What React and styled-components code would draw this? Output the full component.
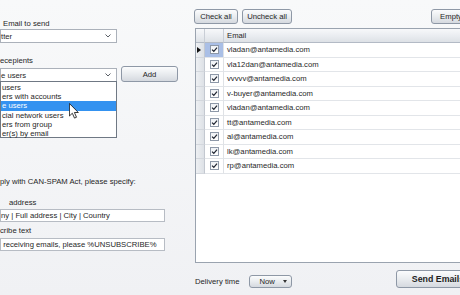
import React from 'react';
import styled, { createGlobalStyle } from 'styled-components';

const Global = createGlobalStyle`
  html, body { margin: 0; padding: 0; background: #f3f4f6; }
  body {
    font-family: "Liberation Sans", Arial, sans-serif;
    font-size: 7.7px;
    color: #1f1f1f;
    overflow: hidden;
  }
`;

const Page = styled.div`
  width: 460px;
  height: 295px;
  overflow: hidden;
  background: linear-gradient(#f8f9fa, #f0f1f4);
`;

const Inner = styled.div`
  width: 490px;
  height: 295px;
  display: flex;
`;

const Left = styled.div`
  width: 194px;
  flex: none;
  display: flex;
  flex-direction: column;
  padding-top: 19px;
  box-sizing: border-box;
`;

const Label = styled.div`
  height: 10px;
  line-height: 10px;
  margin-top: ${(p) => p.$mt || 0}px;
  margin-left: ${(p) => p.$ml || 0}px;
  white-space: nowrap;
`;

const Select = styled.div`
  position: relative;
  width: 117px;
  height: 14px;
  flex: none;
  box-sizing: border-box;
  border: 1px solid #abb1ba;
  background: #fff;
  display: flex;
  align-items: center;
  justify-content: space-between;
  padding-right: 5px;
  white-space: nowrap;
`;

const Chevron = () => (
  <svg width="6" height="4" viewBox="0 0 6 4">
    <path d="M0.5 0.5 L3 3 L5.5 0.5" fill="none" stroke="#5a5f66" strokeWidth="1" />
  </svg>
);

const PickRow = styled.div`
  display: flex;
  align-items: flex-end;
  gap: 4px;
`;

const Dropdown = styled.div`
  position: absolute;
  top: 100%;
  left: -1px;
  width: 117px;
  height: 57px;
  box-sizing: border-box;
  border: 1px solid #6f7884;
  background: #fff;
  padding-top: 0.5px;
  z-index: 2;
`;

const Option = styled.div`
  height: 9.4px;
  line-height: 9.4px;
  padding-left: 1px;
  white-space: nowrap;
  background: ${(p) => (p.$active ? '#3492f0' : 'transparent')};
  color: ${(p) => (p.$active ? '#fff' : '#1f1f1f')};
`;

const Cursor = styled.svg`
  position: absolute;
  left: 68px;
  top: 20px;
`;

const Button = styled.button`
  width: ${(p) => p.$w}px;
  height: ${(p) => p.$h}px;
  flex: none;
  box-sizing: border-box;
  border: 1px solid #8e98a6;
  border-radius: 3px;
  background: linear-gradient(#fbfcfd, #e9ecef 50%, #d5d9df);
  font-family: inherit;
  font-size: ${(p) => p.$fs || 7.7}px;
  font-weight: ${(p) => (p.$bold ? 700 : 400)};
  color: #1f1f1f;
  padding: 0;
  margin-left: ${(p) => (p.$push ? 'auto' : '0')};
  display: flex;
  align-items: center;
  justify-content: center;
  white-space: nowrap;
`;

const Field = styled.div`
  width: 165px;
  height: 13px;
  box-sizing: border-box;
  border: 1px solid #b7bcc4;
  background: #fff;
  line-height: 11px;
  white-space: nowrap;
  overflow: hidden;
  margin-top: ${(p) => p.$mt || 0}px;
`;

const Right = styled.div`
  flex: 1;
  display: flex;
  flex-direction: column;
  padding: 9px 10px 0 0;
  box-sizing: border-box;
`;

const Toolbar = styled.div`
  display: flex;
  gap: 4px;
  height: 15px;
  padding-right: 9px;
`;

const Grid = styled.div`
  margin: 4px 0 0 1px;
  height: 235px;
  box-sizing: border-box;
  border: 1px solid #9aa3af;
  background: #fff;
  display: flex;
  flex-direction: column;
`;

const GridRow = styled.div`
  display: grid;
  grid-template-columns: 9px 19px 1fr;
  height: ${(p) => (p.$head ? 14 : 14.5)}px;
  flex: none;
`;

const HeadCell = styled.div`
  background: linear-gradient(#f7f8fa, #e9ecf0 55%, #dde1e6);
  border-right: 1px solid #c9ced6;
  border-bottom: 1px solid #b3bac5;
  padding-left: ${(p) => (p.$text ? 3 : 0)}px;
  line-height: 13px;
`;

const Indicator = styled.div`
  background: linear-gradient(90deg, #eef0f3, #dde1e6);
  border-right: 1px solid #c3c8d0;
  border-bottom: 1px solid #d3d7dd;
  display: flex;
  align-items: center;
  padding-left: 1px;
`;

const CheckCell = styled.div`
  background: ${(p) => (p.$focus ? '#aabfe6' : '#fff')};
  border-right: 1px solid #dfe2e6;
  border-bottom: 1px solid #e2e5e9;
  display: flex;
  align-items: center;
  justify-content: center;
`;

const EmailCell = styled.div`
  border-bottom: 1px solid #e2e5e9;
  padding-left: 3px;
  line-height: 13.5px;
  white-space: nowrap;
`;

const Box = styled.div`
  width: 9px;
  height: 9px;
  box-sizing: border-box;
  border: 1px solid #8d98a8;
  background: linear-gradient(#eef1f5, #ffffff);
  display: flex;
  align-items: center;
  justify-content: center;
`;

const Check = () => (
  <Box>
    <svg width="7" height="7" viewBox="0 0 7 7">
      <path d="M1 3.6 L2.8 5.3 L6 1.6" fill="none" stroke="#1e2430" strokeWidth="1.2" />
    </svg>
  </Box>
);

const Footer = styled.div`
  margin: 7px 0 0 1px;
  height: 18px;
  display: flex;
  align-items: flex-end;
  gap: 10px;
`;

const FootLabel = styled.div`
  line-height: 13px;
  white-space: nowrap;
`;

const NowBtn = styled(Button)`
  justify-content: space-between;
  padding: 0 4px 0 9px;
`;

const emails = [
  'vladan@antamedia.com',
  'vla12dan@antamedia.com',
  'vvvvv@antamedia.com',
  'v-buyer@antamedia.com',
  'vladan@antamedia.com',
  'tt@antamedia.com',
  'al@antamedia.com',
  'lk@antamedia.com',
  'rp@antamedia.com',
];

const options = [
  'users',
  'ers with accounts',
  'e users',
  'cial network users',
  'ers from group',
  'er(s) by email',
];

export default function App() {
  return (
    <Page>
      <Global />
      <Inner>
        <Left>
          <Label $ml={3}>Email to send</Label>
          <Select>
            <span>tter</span>
            <Chevron />
          </Select>
          <Label $mt={13}>ecepients</Label>
          <PickRow>
            <Select>
              <span>e users</span>
              <Chevron />
              <Dropdown>
                {options.map((o, i) => (
                  <Option key={i} $active={i === 2}>{o}</Option>
                ))}
                <Cursor width="10" height="18" viewBox="0 0 12 19">
                  <path
                    d="M0.5 0.5 L0.5 15.5 L4 12.2 L6.6 18 L9 17 L6.5 11.3 L11.2 11.3 Z"
                    fill="#fff"
                    stroke="#111"
                    strokeWidth="1"
                  />
                </Cursor>
              </Dropdown>
            </Select>
            <Button $w={57} $h={16}>Add</Button>
          </PickRow>
          <Label $mt={95}>ply with CAN-SPAM Act, please specify:</Label>
          <Label $mt={11} $ml={9}>address</Label>
          <Field $mt={1}>ny | Full address | City | Country</Field>
          <Label $mt={4}>cribe text</Label>
          <Field $mt={2}>&nbsp;receiving emails, please %UNSUBSCRIBE%</Field>
        </Left>
        <Right>
          <Toolbar>
            <Button $w={44} $h={15}>Check all</Button>
            <Button $w={50} $h={15}>Uncheck all</Button>
            <Button $w={40} $h={15} $push>Empty</Button>
          </Toolbar>
          <Grid>
            <GridRow $head>
              <HeadCell />
              <HeadCell />
              <HeadCell $text>Email</HeadCell>
            </GridRow>
            {emails.map((e, i) => (
              <GridRow key={i}>
                <Indicator>
                  {i === 0 && (
                    <svg width="4" height="6" viewBox="0 0 4 6">
                      <path d="M0 0 L4 3 L0 6 Z" fill="#111" />
                    </svg>
                  )}
                </Indicator>
                <CheckCell $focus={i === 0}>
                  <Check />
                </CheckCell>
                <EmailCell>{e}</EmailCell>
              </GridRow>
            ))}
          </Grid>
          <Footer>
            <FootLabel>Delivery time</FootLabel>
            <NowBtn $w={43} $h={13}>
              <span>Now</span>
              <svg width="4" height="3" viewBox="0 0 4 3">
                <path d="M0 0 L4 0 L2 3 Z" fill="#333" />
              </svg>
            </NowBtn>
            <Button $w={84} $h={18} $fs={8.8} $bold $push>Send Emails</Button>
          </Footer>
        </Right>
      </Inner>
    </Page>
  );
}
